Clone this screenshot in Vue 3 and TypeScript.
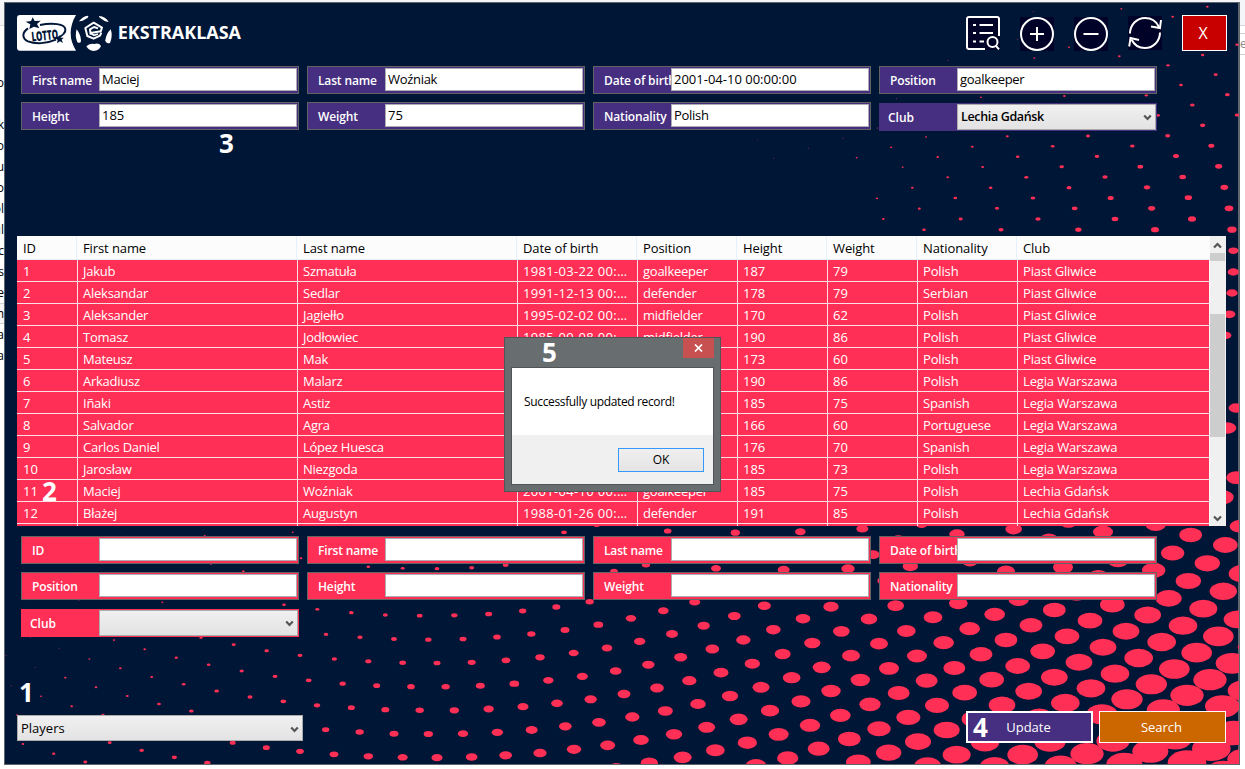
<script setup lang="ts">
import { ref, reactive } from 'vue'

type Dot = [number, number, number]
interface Patch { x: number; y: number; dots: Dot[] }

// Halftone pattern of the window backdrop: each patch holds [cx, cy, rx] at a third of a pixel.
const patches: Patch[] = [
  {
    x: 866, y: -2,
    dots: [
      [754,26,3],[1012,20,4],[908,50,4],[1101,134,5],[998,165,5],[748,169,4],[597,142,3],[493,174,3],[442,118,2],[490,35,2],[234,181,2],
      [894,196,5],[1037,224,6],[933,255,5.5],[1072,284,7],[829,286,5],[583,288,4],[333,292,3],[967,315,7],[1101,345,7],[864,346,6],[998,376,8],[23,384,2],
      [893,407,7.5],[654,408,6],[412,409,4.5],[168,411,3],[1024,437,9],[787,438,7],[548,439,5.5],[307,440,4],[64,442,2.5],
      [918,468,9],[681,469,7],[443,470,5.5],[203,471,4],[1046,499,10.5],[811,500,8.5],[575,500,6.5],[338,501,4.5],[98,502,3],
      [938,531,10],[705,531,8],[469,532,6],[233,532,4],[1063,562,11.5],[831,562,9.5],[597,563,7.5],[362,563,5.5],[127,563,4],
      [955,593,11],[722,594,9],[489,594,7],[256,594,5.5],[21,595,3.5],[1077,625,13],[845,625,10.5],[614,625,8.5],[381,625,6.5],[148,626,4.5],
      [966,657,12],[735,657,10],[504,657,8],[272,657,6],[40,657,4],[1086,689,14],[855,689,12],[625,689,9.5],[393,689,7.5],[162,689,5.5],
    ],
  },
  { x: 586, y: 53, dots: [[903,277,3],[800,308,3],[655,280,2],[759,250,2],[551,310,2],[502,255,1.5],[862,219,2],[919,131,2]] },
  {
    x: 826, y: 228,
    dots: [[1210,62,15],[1210,126,17],[1206,189,17],[1198,253,18],[1187,316,17],[1218,534,22],[1192,594,27],[1219,743,30],[1178,802,33]],
  },
  {
    x: -4, y: 523,
    dots: [
      [878,22,3],[903,100,4],[614,32,3],[364,22,1],[633,117,3],[730,139,4],[1105,125,5.5],[1208,130,6],[221,133,1],[487,232,3],[236,226,2],
      [852,239,5.5],[952,253,6],[1054,263,7],[1156,270,7.5],[76,244,1],[91,337,2],[342,345,3.5],[603,338,5],[701,359,6],[800,377,6.5],[900,391,7.5],
      [978,328,7],[1080,337,8],[1182,342,8.5],[434,373,4],[529,398,5],[626,419,5.5],[725,438,6.5],[825,454,7.5],[926,466,8.5],[1028,476,9.5],[1130,482,10.5],[1233,485,11.5],
      [1003,402,8],[1105,409,9],[1208,413,10],[178,370,2],[268,402,3],[361,430,4],[455,456,4.5],[551,478,5.5],[650,498,7],[750,516,7.5],[850,529,8.5],[951,541,9.5],[1054,548,10.5],[1156,554,12],
      [18,392,2],[106,427,2],[196,458,3.5],[288,487,4],[382,513,4.5],[477,537,5.5],[574,558,7],[34,482,2],[123,514,3],[215,544,4],[309,570,5],[51,570,3],
      [977,614,11],[1079,621,12.5],[1182,626,13.5],[69,657,4],[161,686,5],[256,711,6],[329,653,6],[425,676,7],[523,697,8],[622,714,9.5],[698,653,9],[799,668,10.5],[900,679,11.5],[1002,688,13],[1105,694,14],[1208,697,15],
    ],
  },
  {
    x: 411, y: 523,
    dots: [
      [447,22,8.5],[545,0,9],[758,18,11.5],[961,23,14],[1156,20,16],[66,131,7],[170,128,7.5],[272,120,8.5],[597,139,11.5],[693,119,12.5],[903,130,15],[1106,134,18],
      [14,272,8.5],[118,271,9.5],[221,267,10.5],[323,258,11],[424,246,12],[524,230,12.5],[40,344,9.5],[144,342,10.5],[246,336,11.5],[349,327,12.5],[450,315,13.5],[550,299,14.5],[648,280,15.5],[745,257,16],[839,231,16.5],
      [66,414,10.5],[170,412,12],[273,406,13],[375,397,14],[476,384,15],[576,369,16],[674,349,17],[771,327,18],[866,302,18.5],[958,273,19],[1048,242,19.5],
      [92,485,12.5],[196,482,13.5],[298,476,14.5],[400,466,15.5],[502,454,16.5],[602,438,17.5],[700,419,18.5],[797,397,19.5],[892,372,20.5],[985,345,21.5],[1075,314,22],[1164,281,22],
      [14,556,12.5],[118,556,14],[221,552,15.5],[324,545,16.5],[426,535,17.5],[527,523,18.5],[627,507,19.5],[726,489,20.5],[823,467,21.5],[918,443,22.5],[1012,416,23],[1103,387,24],[1192,354,24.5],
      [40,627,14],[144,626,15.5],[247,622,17],[350,615,18],[451,604,19],[552,592,20.5],[652,576,21.5],[751,558,22.5],[849,537,23.5],[945,513,24.5],[1038,487,25.5],[1130,458,26.5],[1220,427,27],
      [66,698,16.5],[170,696,17.5],[272,691,19],[375,684,20],[477,673,21.5],[578,661,22.5],[678,645,23.5],[777,628,24.5],[875,607,25.5],[971,583,27],[1065,557,27.5],[1158,529,28.5],
      [604,728,22],[703,714,26],[803,697,27],[901,676,28],[997,653,29],[1091,628,30],[1185,601,30.5],[1023,722,31],[1118,699,32],[1211,671,33],
    ],
  },
  {
    x: 826, y: 523,
    dots: [
      [97,11,18],[275,-2,17],[381,28,23],[551,12,25],[715,-8,25],[819,21,30],[977,-2,31],[1082,30,34],[1186,60,37],[1228,4,29],[205,44,20],[657,43,27],[129,89,20],
      [1028,84,35],[1132,115,38],[1236,146,40],[54,131,20],[241,124,23],[420,108,25],[528,139,27],[699,127,30],[864,106,32],[971,136,35],[1075,168,38],[1180,199,41],[162,167,20],[805,154,30],
      [197,242,25],[385,235,28],[566,223,31],[740,207,32],[847,239,37],[1016,220,39],[1120,251,42],[1223,283,42],[3,245,23],[117,282,25],[309,277,28],[494,268,31],[673,255,34],[780,287,37],[953,270,40],[1059,302,43],[1165,334,46],
      [34,319,25],[229,318,28],[419,311,31],[603,301,34],[711,334,37],[888,319,40],[995,351,43],[1100,383,46],[1206,415,49],[1242,366,19],[147,356,27],[341,353,31],[528,345,34],[638,379,37],[819,367,40],[926,399,43],[1033,432,46],[1140,464,50],[1242,497,49],
      [63,392,27],[261,393,30],[453,388,34],[563,423,37],[747,412,40],[855,446,43],[964,478,47],[1071,511,50],[1177,544,52],[177,430,30],[373,429,33],[485,464,37],[673,457,40],[783,490,43],[891,523,47],[1000,555,50],
      [91,465,29],[290,467,33],[404,503,37],[596,499,40],[706,534,43],[816,568,47],[3,498,29],[206,504,33],[321,541,36],[516,540,40],[628,578,43],[120,538,32],[235,577,36],[434,582,39],[31,571,31],[147,611,35],[350,615,39],
      [264,650,39],[465,652,43],[58,642,34],[176,683,38],[380,689,42],[85,712,37],[293,722,40],[494,724,44],[578,689,46],[660,650,47],[692,722,48],[771,686,50],[849,648,50],[883,718,54],[961,679,54],[1035,640,52],[1071,713,58],[1144,671,58],[1211,624,58],[1242,703,50],[1180,742,54],
    ],
  },
]
const ellipses = patches.flatMap(p => p.dots.map(([cx, cy, rx]) => ({
  cx: p.x + cx / 3, cy: p.y + cy / 3, rx: rx / 3, ry: (rx * 0.63 + 0.4) / 3,
  o: rx < 2.6 ? 0.5 : 1,
})))

interface Field { label: string; value: string; select?: boolean }
const editFields = reactive<Field[]>([
  { label: 'First name', value: 'Maciej' },
  { label: 'Last name', value: 'Woźniak' },
  { label: 'Date of birth', value: '2001-04-10 00:00:00' },
  { label: 'Position', value: 'goalkeeper' },
  { label: 'Height', value: '185' },
  { label: 'Weight', value: '75' },
  { label: 'Nationality', value: 'Polish' },
  { label: 'Club', value: 'Lechia Gdańsk', select: true },
])
const searchFields = reactive<Field[]>([
  'ID', 'First name', 'Last name', 'Date of birth', 'Position', 'Height', 'Weight', 'Nationality',
].map(label => ({ label, value: '' } as Field)).concat({ label: 'Club', value: '', select: true }))

const columns = ['ID', 'First name', 'Last name', 'Date of birth', 'Position', 'Height', 'Weight', 'Nationality', 'Club']
const rows: string[][] = [
  ['1', 'Jakub', 'Szmatuła', '1981-03-22 00:…', 'goalkeeper', '187', '79', 'Polish', 'Piast Gliwice'],
  ['2', 'Aleksandar', 'Sedlar', '1991-12-13 00:…', 'defender', '178', '79', 'Serbian', 'Piast Gliwice'],
  ['3', 'Aleksander', 'Jagiełło', '1995-02-02 00:…', 'midfielder', '170', '62', 'Polish', 'Piast Gliwice'],
  ['4', 'Tomasz', 'Jodłowiec', '1985-09-08 00:…', 'midfielder', '190', '86', 'Polish', 'Piast Gliwice'],
  ['5', 'Mateusz', 'Mak', '', '', '173', '60', 'Polish', 'Piast Gliwice'],
  ['6', 'Arkadiusz', 'Malarz', '', '', '190', '86', 'Polish', 'Legia Warszawa'],
  ['7', 'Iñaki', 'Astiz', '', '', '185', '75', 'Spanish', 'Legia Warszawa'],
  ['8', 'Salvador', 'Agra', '', '', '166', '60', 'Portuguese', 'Legia Warszawa'],
  ['9', 'Carlos Daniel', 'López Huesca', '', '', '176', '70', 'Spanish', 'Legia Warszawa'],
  ['10', 'Jarosław', 'Niezgoda', '', '', '185', '73', 'Polish', 'Legia Warszawa'],
  ['11', 'Maciej', 'Woźniak', '2001-04-10 00:…', 'goalkeeper', '185', '75', 'Polish', 'Lechia Gdańsk'],
  ['12', 'Błażej', 'Augustyn', '1988-01-26 00:…', 'defender', '191', '85', 'Polish', 'Lechia Gdańsk'],
]
const table = ref('Players')
const behind = ['o', '', 'k', 'o', 'u', 'o', 'ol', 'ul', 'ic', 's', 'e', 'ch', 'a', 'a']
</script>

<template>
  <div class="desktop">
    <div class="behind-top"></div>
    <div class="behind-left"><span v-for="(t, i) in behind" :key="i" :class="{ boxed: t === 'ch' }">{{ t }}</span></div>

    <main class="window">
      <svg class="backdrop" width="1234" height="761" viewBox="1 1 1234 761">
        <ellipse v-for="(e, i) in ellipses" :key="i" :cx="e.cx" :cy="e.cy" :rx="e.rx" :ry="e.ry" :opacity="e.o" />
      </svg>

      <header class="top">
        <svg class="logo" width="225" height="36" viewBox="51 45 675 108">
          <path fill="#fff" d="M60 45H228Q196 100 228 152H60Q51 152 51 143V54Q51 45 60 45Z" />
          <path fill="#001637" d="M98 52l6 11 18-1-11 10 7 13-16-5-14 7 3-14-14-8 16-2z" />
          <path fill="#001637" d="M179 105l3 8 9 0-6 6 4 10-9-5-9 6 2-10-8-6 10-1z" />
          <path fill="none" stroke="#001637" stroke-width="6" d="M120 75C158 67 194 72 196 87C198 99 186 108 170 115M84 85C66 97 65 115 84 124C106 133 140 131 168 119" />
          <text x="94" y="121" font-size="40" textLength="80" lengthAdjust="spacingAndGlyphs" fill="#001637" class="lotto" transform="rotate(-6 132 105)">LOTTO</text>
          <g fill="#fff">
            <path d="M237 64Q247 49 264 47Q268 51 257 57Q247 65 237 64Z" />
            <path d="M297 48Q317 50 326 66Q316 67 306 58Q296 52 297 48Z" />
            <path d="M230 88Q224 107 232 127Q244 132 243 121Q242 104 230 88Z" />
            <path d="M332 88Q339 108 330 129Q318 132 316 121Q318 102 332 88Z" />
            <path d="M259 139Q269 128 283 132Q297 128 303 138Q298 151 281 153Q265 151 259 139Z" />
          </g>
          <path fill="none" stroke="#fff" stroke-width="6" stroke-linejoin="round" d="M304 98L300 107L281 116L262 108L256 84L281 68L306 83L302 94L272 99M272 104L270 88L282 81L294 85" />
          <path fill="none" stroke="#fff" stroke-width="5" d="M272 100L282 106L294 102" />
          <text x="353" y="118" font-size="54" textLength="370" lengthAdjust="spacingAndGlyphs" fill="#fff" class="brand">EKSTRAKLASA</text>
        </svg>

        <nav class="tools">
          <svg width="34" height="34" viewBox="0 0 34 34" fill="none" stroke="#fff" stroke-width="2">
            <rect width="34" height="34" fill="#000227" stroke="none" />
            <path d="M19 33H3Q1 33 1 31V3Q1 1 3 1H31Q33 1 33 3V20" />
            <path d="M13.500 9H27M13.500 17H27M13.500 25.500H18" />
            <path d="M7 9H10M7 17H10M7 25.500H10" />
            <circle cx="26.500" cy="26" r="5" /><path d="M30 29.800L33 33.300" />
          </svg>
          <svg class="low" width="34" height="34" viewBox="0 0 34 34" fill="none" stroke="#fff" stroke-width="2">
            <rect width="34" height="34" fill="#000227" stroke="none" />
            <circle cx="17" cy="17" r="16" /><path d="M10 17H24M17 10V24" />
          </svg>
          <svg class="low" width="34" height="34" viewBox="0 0 34 34" fill="none" stroke="#fff" stroke-width="2">
            <rect width="34" height="34" fill="#000227" stroke="none" />
            <circle cx="17" cy="17" r="16" /><path d="M9.500 17H24.500" />
          </svg>
          <svg width="34" height="34" viewBox="0 0 34 34" fill="none" stroke="#fff" stroke-width="2">
            <rect width="34" height="34" fill="#000227" stroke="none" />
            <path d="M2 17.500A15 15.500 0 0 1 17 2A15.500 15.500 0 0 1 31 11M32 16.500A15 15.500 0 0 1 17 32A15 15.500 0 0 1 3.500 23.500" />
            <path d="M33 4L32 12L23 10.500M1.200 30.500L2.500 22L11 24" />
          </svg>
          <button class="close">X</button>
        </nav>
      </header>

      <section class="fields edit">
        <label v-for="f in editFields" :key="f.label" class="field" :class="{ combo: f.select }">
          <span class="caption">{{ f.label }}</span>
          <span v-if="f.select" class="pick bold">{{ f.value }}
            <svg width="9" height="8" viewBox="0 0 9 8"><path d="M1.200 1.500L4.500 5L7.800 1.500" fill="none" stroke="#555" stroke-width="2.200" /></svg>
          </span>
          <input v-else v-model="f.value" type="text" :class="{ digits: /^\d/.test(f.value) }" />
        </label>
      </section>

      <section class="list">
        <div class="grid">
          <div class="row head"><span v-for="c in columns" :key="c">{{ c }}</span></div>
          <div v-for="r in rows" :key="r[0]" class="row"><span v-for="(c, i) in r" :key="i" :class="'c' + i">{{ c }}</span></div>
          <div class="row rest"><span v-for="c in columns" :key="c"></span></div>
        </div>
        <div class="scroll">
          <svg width="9" height="7" viewBox="0 0 9 7"><path d="M1 5.500L4.500 2L8 5.500" fill="none" stroke="#555" stroke-width="2.200" /></svg>
          <i class="stub"></i>
          <i class="thumb"></i>
          <svg class="down" width="9" height="7" viewBox="0 0 9 7"><path d="M1 1.500L4.500 5L8 1.500" fill="none" stroke="#555" stroke-width="2.200" /></svg>
        </div>
      </section>

      <section class="fields search">
        <label v-for="f in searchFields" :key="f.label" class="field" :class="{ combo: f.select }">
          <span class="caption">{{ f.label }}</span>
          <span v-if="f.select" class="pick">{{ f.value }}
            <svg width="9" height="8" viewBox="0 0 9 8"><path d="M1.200 1.500L4.500 5L7.800 1.500" fill="none" stroke="#555" stroke-width="2.200" /></svg>
          </span>
          <input v-else v-model="f.value" type="text" />
        </label>
      </section>

      <footer class="bottom">
        <span class="pick players">{{ table }}
          <svg width="9" height="8" viewBox="0 0 9 8"><path d="M1.200 1.500L4.500 5L7.800 1.500" fill="none" stroke="#555" stroke-width="2.200" /></svg>
        </span>
        <button class="action update">Update</button>
        <button class="action find">Search</button>
      </footer>

      <b class="mark m1">1</b>
      <b class="mark m2">2</b>
      <b class="mark m3">3</b>
      <b class="mark m4">4</b>

      <div class="dialog">
        <button class="dismiss">
          <svg width="9" height="8" viewBox="0 0 9 8"><path d="M1 0.500L8 7.500M8 0.500L1 7.500" stroke="#fff" stroke-width="1.700" /></svg>
        </button>
        <div class="panel">
          <p>Successfully updated record!</p>
          <div class="answers"><button>OK</button></div>
        </div>
        <b class="mark m5">5</b>
      </div>
    </main>

    <div class="behind-right"><span>eb</span></div>
  </div>
</template>

<style>
body { background: #fff; overflow: hidden; }
</style>

<style scoped>
* { box-sizing: border-box; }
.desktop {
  display: grid; grid-template: 2px 763px 4px / 4px 1236px 5px;
  width: 1245px; height: 769px; overflow: hidden; background: #fff;
  font-family: "Open Sans", "Noto Sans", sans-serif; font-size: 13px; color: #000;
}
.behind-top { grid-column: 1 / -1; background: #f3f5f8; }
.behind-left {
  overflow: hidden; display: flex; flex-direction: column; padding-top: 70px;
  background: linear-gradient(#f3f5f8 23px, #d5d9de 23px 24px, #fff 24px);
}
.behind-left span { flex: none; height: 21px; line-height: 21px; align-self: flex-end; font-size: 12px; }
.behind-left .boxed { line-height: 19px; border: solid #d0d0d0; border-width: 1px 0; background: #f5f5f7; }
.behind-right { overflow: hidden; padding-top: 31px; background: linear-gradient(#f3f5f8 23px, #d5d9de 23px 24px, #fff 24px); }
.behind-right span { display: block; height: 22px; line-height: 20px; border: solid #d0d0d0; border-width: 1px 0; color: #888; font-size: 12px; }

.window { position: relative; border: 1px solid #5f666b; border-right-width: 2px; background: #001637; padding: 12px 12px 0; }
.backdrop { position: absolute; left: 0; top: 0; fill: #ff2f55; }
.window > section, .window > header, .window > footer { position: relative; }

.top { display: flex; justify-content: space-between; height: 36px; }
.logo { display: block; }
.lotto { font-family: "Open Sans", sans-serif; font-weight: 800; }
.brand { font-family: "Open Sans", sans-serif; font-weight: 700; }
.tools { display: flex; gap: 20px; margin-right: -1px; padding-top: 1px; }
.tools .low { margin-top: 1px; }
button { font: inherit; padding: 0; border-radius: 0; }
.close { width: 45px; height: 36px; margin-top: -1px; background: #c80000; border: 1px solid #fff; color: #fff; font-size: 16px; padding-right: 3px; }

.fields { display: grid; grid-template-columns: repeat(4, 278px); grid-auto-rows: 28px; gap: 8px; margin-left: 4px; }
.edit { margin-top: 15px; --tone: #462e80; }
.search { margin-top: 10px; --tone: #ff2f55; }
.field { display: flex; background: var(--tone); border: 1px solid #636363; padding: 1px; }
.caption {
  width: 76px; flex: none; overflow: hidden; white-space: nowrap; padding-left: 9px;
  color: #fff; font-weight: 600; font-size: 12px; line-height: 26px; letter-spacing: -0.15px;
}
input {
  flex: 1; min-width: 0; height: 23px; border: 1px solid #abadb3; border-radius: 0; padding: 0 2px 2px; margin: 0;
  background: #fff; font: inherit; letter-spacing: -0.3px; color: #000; outline: none;
}
.digits { letter-spacing: 0; }
.combo { position: relative; top: 1px; border-color: var(--tone); padding: 0; }
.combo .caption { width: 77px; padding-left: 8px; line-height: 28px; letter-spacing: 0; }
.pick {
  flex: 1; display: flex; align-items: center; justify-content: space-between; height: 26px; padding: 0 3px 1px 3px;
  border: 1px solid #acacac; background: linear-gradient(#f0f0f0, #e3e3e3); white-space: pre;
}
.pick svg { margin: 3px 0 0 auto; }
.bold { font-weight: 600; font-size: 12.5px; letter-spacing: -0.35px; }

.list { display: flex; height: 290px; margin-top: 106px; }
.grid { width: 1192px; overflow: hidden; background: #ff2f55; }
.row { display: grid; grid-template-columns: 61px 220px 220px 120px 100px 90px 90px 100px 191px; height: 22px; color: #fff; line-height: 22px; border-bottom: 1px solid #ffdfe5; }
.row span { padding-left: 6px; white-space: nowrap; border-right: 1px solid #ffdfe5; }
.row span + span { padding-left: 5px; }
.row span:last-child { border-right: 0; }
.row .c1, .row .c2, .row .c4 { letter-spacing: -0.25px; }
.row .c3 { letter-spacing: 0.32px; }
.row .c7, .row .c8 { letter-spacing: -0.15px; }
.head { height: 24px; line-height: 24px; background: #fcfcfc; color: #000; border-bottom-color: #e5f0fb; letter-spacing: -0.1px; grid-template-columns: 60px 220px 220px 120px 100px 90px 90px 100px 192px; }
.head span { border-color: #e5f0fb; }
.head span + span { padding-left: 6px; }
.scroll { width: 17px; background: #f0f0f0; border-left: 1px solid #fafafa; padding-right: 1px; display: flex; flex-direction: column; align-items: stretch; }
.scroll svg { align-self: center; margin-top: 6px; }
.stub { height: 8px; margin-top: 4px; background: #cdcdcd; }
.thumb { height: 123px; margin-top: 53px; background: #cdcdcd; }
.scroll .down { margin-top: auto; margin-bottom: 4px; }

.bottom { display: flex; align-items: flex-start; margin-top: 75px; height: 32px; }
.players { flex: none; width: 286px; margin-top: 4px; padding-bottom: 0; }
.action { width: 127px; height: 32px; color: #fff; border: 1px solid #fff; }
.update { margin-left: auto; background: #462e80; border-width: 2px; padding-right: 2px; }
.find { margin-left: 6px; margin-right: 0; background: #cc6700; padding-right: 2px; }

.mark { position: absolute; color: #fff; font-size: 26px; line-height: 26px; font-weight: 700; }
.m1 { left: 14px; top: 676px; }
.m2 { left: 37px; top: 475px; }
.m3 { left: 214px; top: 127px; }
.m4 { left: 968px; top: 711px; }
.m5 { left: 37px; top: 1px; }

.dialog { position: absolute; left: 499px; top: 334px; width: 217px; height: 155px; background: #686d70; border: 1px solid #515557; padding: 0 6px 6px; display: flex; flex-direction: column; }
.dismiss { align-self: flex-end; width: 31px; height: 20px; background: #c75050; border: 0; display: grid; place-items: center; }
.panel { margin-top: 9px; height: 118px; border: 1px solid #505456; background: #fff; display: flex; flex-direction: column; font-size: 12px; }
.panel p { margin: 0; height: 67px; padding-left: 12px; line-height: 68px; white-space: nowrap; letter-spacing: -0.35px; }
.answers { flex: 1; background: #f0f0f0; display: flex; justify-content: flex-end; padding: 13px 9px 0 0; }
.answers button { width: 86px; height: 24px; padding-bottom: 2px; border: 1px solid #3399ff; background: linear-gradient(#efefef, #e4e4e4); color: #000; }
</style>
